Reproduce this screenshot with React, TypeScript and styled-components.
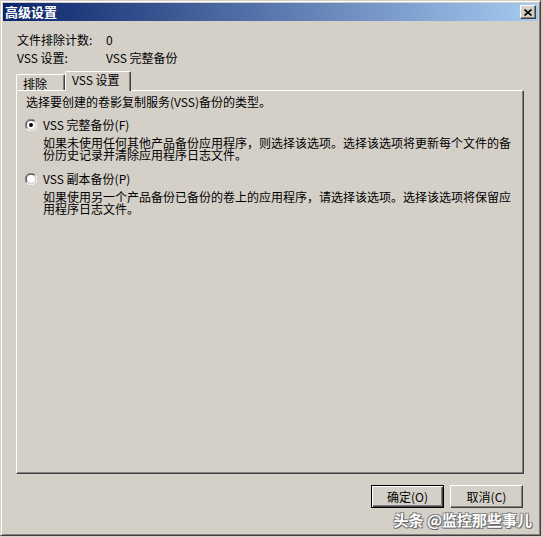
import React from "react";
import styled, { createGlobalStyle } from "styled-components";

const colors = {
  face: "#d4d0c8",
  light: "#ffffff",
  shadow: "#808080",
  dark: "#404040",
  titleFrom: "#0a246a",
  titleTo: "#a6caf0",
  text: "#000000",
};

const font = `"Noto Sans CJK SC", "Liberation Sans", sans-serif`;

const GlobalStyle = createGlobalStyle`
  html, body {
    margin: 0;
    padding: 0;
    background: ${colors.face};
  }
  body {
    font-family: ${font};
    font-size: 12px;
    color: ${colors.text};
  }
`;

const Radio = ({ checked }: { checked?: boolean }) => (
  <RadioBox>
    <svg width="12" height="12" viewBox="0 0 12 12">
      <path d="M10.5 2.2A5.5 5.5 0 0 0 1.5 9.8" fill="none" stroke={colors.shadow} strokeWidth="1" />
      <path d="M9.6 2.8A4.5 4.5 0 0 0 2.4 9.2" fill="none" stroke={colors.dark} strokeWidth="1" />
      <path d="M1.5 9.8A5.5 5.5 0 0 0 10.5 2.2" fill="none" stroke={colors.light} strokeWidth="1" />
      <path d="M2.4 9.2A4.5 4.5 0 0 0 9.6 2.8" fill="none" stroke={colors.face} strokeWidth="1" />
      <circle cx="6" cy="6" r="3.9" fill={colors.light} />
      {checked && <circle cx="6" cy="6" r="2" fill={colors.text} />}
    </svg>
  </RadioBox>
);

const CloseIcon = () => (
  <svg width="8" height="7" viewBox="0 0 8 7">
    <path d="M0.5 0.5L7.5 6.5M7.5 0.5L0.5 6.5" stroke={colors.text} strokeWidth="1.6" />
  </svg>
);

const options = [
  {
    label: "VSS 完整备份(F)",
    checked: true,
    text: "如果未使用任何其他产品备份应用程序，则选择该选项。选择该选项将更新每个文件的备份历史记录并清除应用程序日志文件。",
  },
  {
    label: "VSS 副本备份(P)",
    checked: false,
    text: "如果使用另一个产品备份已备份的卷上的应用程序，请选择该选项。选择该选项将保留应用程序日志文件。",
  },
];

export default function App() {
  return (
    <>
      <GlobalStyle />
      <Window>
        <TitleBar>
          <Title>高级设置</Title>
          <CloseButton>
            <CloseIcon />
          </CloseButton>
        </TitleBar>
        <Body>
          <Info>
            <span>文件排除计数:</span>
            <span>0</span>
            <span>VSS 设置:</span>
            <span>VSS 完整备份</span>
          </Info>
          <TabStrip>
            <Tab>排除</Tab>
            <Tab active>VSS 设置</Tab>
          </TabStrip>
          <Panel>
            <Intro>选择要创建的卷影复制服务(VSS)备份的类型。</Intro>
            {options.map(({ label, checked, text }) => (
              <Option key={label}>
                <OptionRow>
                  <Radio checked={checked} />
                  <span>{label}</span>
                </OptionRow>
                <Description>{text}</Description>
              </Option>
            ))}
          </Panel>
          <ButtonRow>
            <Button isDefault>确定(O)</Button>
            <Button>取消(C)</Button>
          </ButtonRow>
        </Body>
        <Watermark>头条 @监控那些事儿</Watermark>
      </Window>
    </>
  );
}

const Window = styled.div`
  position: relative;
  width: 541px;
  height: 536px;
  box-sizing: border-box;
  padding: 2px;
  background: ${colors.face};
  border: 1px solid;
  border-color: ${colors.face} ${colors.dark} ${colors.dark} ${colors.face};
  box-shadow: inset 1px 1px ${colors.light}, inset -1px -1px ${colors.shadow};
  display: flex;
  flex-direction: column;
`;

const TitleBar = styled.div`
  height: 18px;
  display: flex;
  align-items: center;
  justify-content: space-between;
  padding: 0 2px 0 2px;
  background: linear-gradient(to right, ${colors.titleFrom}, ${colors.titleTo});
`;

const Title = styled.span`
  color: ${colors.light};
  font-weight: bold;
  font-size: 13px;
  line-height: 18px;
`;

const CloseButton = styled.div`
  width: 16px;
  height: 14px;
  box-sizing: border-box;
  display: flex;
  align-items: center;
  justify-content: center;
  background: ${colors.face};
  border: 1px solid;
  border-color: ${colors.light} ${colors.dark} ${colors.dark} ${colors.light};
  box-shadow: inset -1px -1px ${colors.shadow};
`;

const Body = styled.div`
  flex: 1;
  display: flex;
  flex-direction: column;
  padding: 10px 14px 25px 13px;
`;

const Info = styled.div`
  display: grid;
  grid-template-columns: 89px auto;
  grid-auto-rows: 18px;
  align-items: center;
  padding-left: 1px;
  line-height: 18px;
`;

const TabStrip = styled.div`
  margin-top: 4px;
  height: 19px;
  display: flex;
  align-items: flex-end;
  position: relative;
  z-index: 1;
`;

const Tab = styled.div<{ active?: boolean }>`
  box-sizing: border-box;
  height: ${(p) => (p.active ? "20px" : "16px")};
  margin-bottom: ${(p) => (p.active ? "-1px" : "0")};
  padding: ${(p) => (p.active ? "1px 10px 0 6px" : "2px 17px 0 6px")};
  line-height: 13px;
  background: ${colors.face};
  border-top: 1px solid ${colors.light};
  border-left: 1px solid ${colors.light};
  border-right: 1px solid ${colors.dark};
  box-shadow: inset -1px 0 ${colors.shadow};
  border-radius: 2px 2px 0 0;
`;

const Panel = styled.div`
  flex: 1;
  padding: 4px 7px 0 9px;
  border: 1px solid;
  border-color: ${colors.light} ${colors.dark} ${colors.dark} ${colors.light};
  box-shadow: inset -1px -1px ${colors.shadow};
`;

const Intro = styled.div`
  line-height: 14px;
  margin-bottom: 9px;
`;

const Option = styled.div`
  & + & {
    margin-top: 11px;
  }
`;

const OptionRow = styled.div`
  display: flex;
  align-items: center;
  height: 14px;
  line-height: 14px;
`;

const RadioBox = styled.span`
  display: inline-flex;
  width: 12px;
  height: 12px;
  margin: 0 6px 0 -1px;
`;

const Description = styled.div`
  margin: 5px 0 0 17px;
  max-width: 474px;
  line-height: 12px;
`;

const ButtonRow = styled.div`
  margin-top: 11px;
  display: flex;
  justify-content: flex-end;
  gap: 6px;
  padding-right: 1px;
`;

const Button = styled.div<{ isDefault?: boolean }>`
  width: 73px;
  height: 23px;
  box-sizing: border-box;
  display: flex;
  align-items: center;
  justify-content: center;
  background: ${colors.face};
  border: 1px solid;
  border-color: ${(p) =>
    p.isDefault
      ? colors.text
      : `${colors.light} ${colors.dark} ${colors.dark} ${colors.light}`};
  box-shadow: ${(p) =>
    p.isDefault
      ? `inset 1px 1px ${colors.light}, inset -1px -1px ${colors.dark}, inset -2px -2px ${colors.shadow}`
      : `inset -1px -1px ${colors.shadow}`};
`;

const Watermark = styled.div`
  position: absolute;
  right: 8px;
  bottom: 6px;
  font-size: 15px;
  font-weight: bold;
  line-height: 18px;
  color: ${colors.light};
  text-shadow: 1px 1px 0 #666, -1px -1px 0 #888, 1px -1px 0 #888, -1px 1px 0 #888;
`;
